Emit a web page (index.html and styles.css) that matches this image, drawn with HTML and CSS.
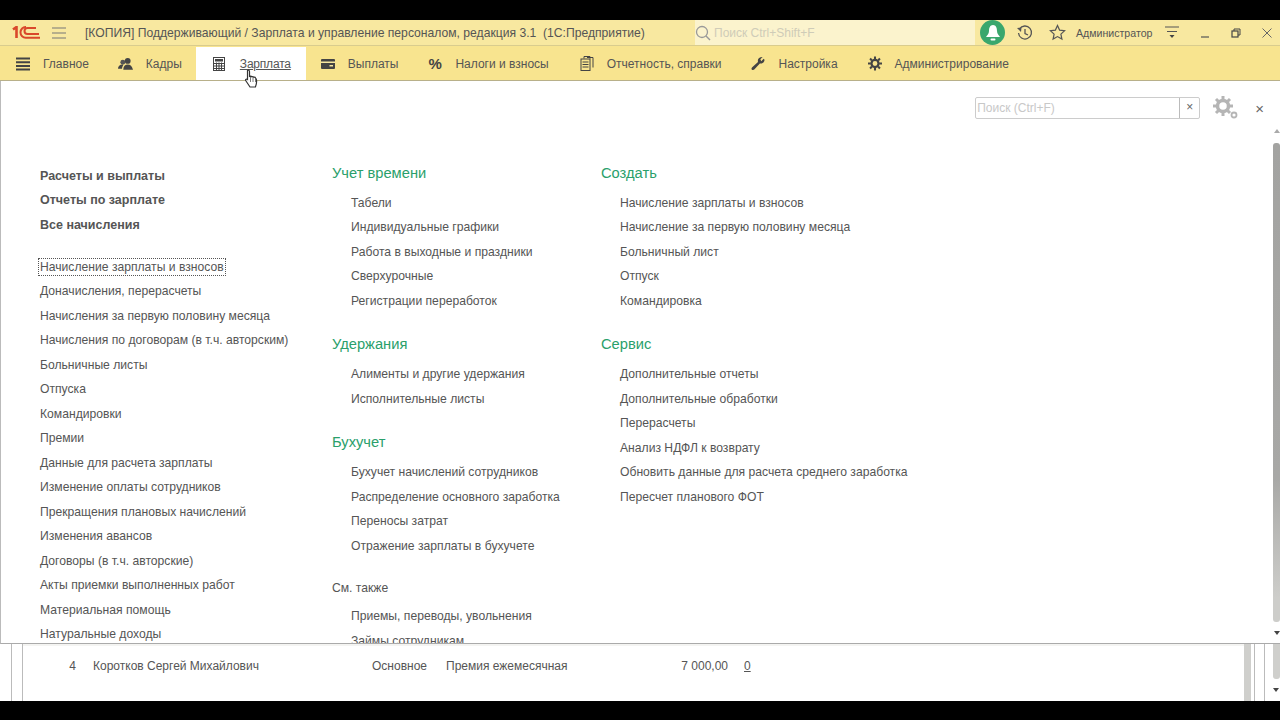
FILE: index.html
```html
<!DOCTYPE html>
<html>
<head>
    <title>Зарплата и управление персоналом</title>
    <meta charset="UTF-8">
    <link rel="stylesheet" href="styles.css">
</head>
<body>
    <div class="screen">
        <div class="titlebar">
            <svg class="logo" width="28" height="13" viewBox="0 0 28 13"><path d="M1 3.500l3.500-2.500v11" fill="none" stroke="#d9482b" stroke-width="2.600"/><path d="M27 8H15.500a3 3 0 0 1 0-6H24" fill="none" stroke="#d9482b" stroke-width="2"/><path d="M28 11.800H14a5.300 5.300 0 0 1-5.500-5.400A5.300 5.300 0 0 1 14 1" fill="none" stroke="#d9482b" stroke-width="2"/></svg>
            <svg class="burger" width="14" height="12" viewBox="0 0 14 12"><path d="M0 1h14M0 6h14M0 11h14" stroke="#777" stroke-width="1"/></svg>
            <div class="app-title">[КОПИЯ] Поддерживающий / Зарплата и управление персоналом, редакция 3.1&nbsp; (1С:Предприятие)</div>
            <div class="global-search">
                <svg width="16" height="16" viewBox="0 0 16 16"><circle cx="7" cy="7" r="5.500" fill="none" stroke="#999" stroke-width="1.300"/><path d="M11 11l4 4" stroke="#999" stroke-width="1.500"/></svg>
                <span>Поиск Ctrl+Shift+F</span>
            </div>
            <div class="bell">
                <svg width="16" height="18" viewBox="0 0 16 18"><path d="M8 1c3 0 4 3 4 6 0 3 2 4 3 6H1c1-2 3-3 3-6 0-3 1-6 4-6z" fill="#fff"/><rect x="5.500" y="14.500" width="5" height="2" rx="1" fill="#fff"/></svg>
            </div>
            <svg class="tool history" width="18" height="18" viewBox="0 0 18 18"><path d="M3.500 5a6.500 6.500 0 1 1-1 4" fill="none" stroke="#555" stroke-width="1.300"/><path d="M1 4l4.500-.5L5 8z" fill="#555"/><path d="M9 5v4.500l3 1.500" fill="none" stroke="#555" stroke-width="1.300"/></svg>
            <svg class="tool star" width="17" height="17" viewBox="0 0 17 17"><path d="M8.500 1.500l2.100 4.600 5 .6-3.700 3.400 1 5-4.400-2.500-4.400 2.500 1-5L1.400 6.700l5-.6z" fill="none" stroke="#555" stroke-width="1.200"/></svg>
            <div class="user">Администратор</div>
            <svg class="tool user-menu" width="14" height="13" viewBox="0 0 14 13"><path d="M0 1h14M2 5.500h10" stroke="#555" stroke-width="1"/><path d="M4.500 9h5L7 12z" fill="#444"/></svg>
            <div class="window-btns">
                <svg width="10" height="10" viewBox="0 0 10 10"><path d="M1 9h8" stroke="#555" stroke-width="1.200"/></svg>
                <svg width="10" height="10" viewBox="0 0 10 10"><rect x="1" y="3" width="6" height="6" fill="none" stroke="#444" stroke-width="1.200"/><path d="M3 3V1h6v6H7" fill="none" stroke="#444"/></svg>
                <svg width="10" height="10" viewBox="0 0 10 10"><path d="M.5.500l9 9M9.500.500l-9 9" stroke="#666" stroke-width="1"/></svg>
            </div>
        </div>

        <div class="sections">
            <div class="section">
                <svg width="14" height="14" viewBox="0 0 14 14"><path d="M0 1.500h14M0 5.200h14M0 8.900h14M0 12.600h14" stroke="#444" stroke-width="2"/></svg>
                <span>Главное</span>
            </div>
            <div class="section">
                <svg width="15" height="14" viewBox="0 0 17 15"><circle cx="11" cy="4" r="3.300" fill="#444"/><circle cx="5.500" cy="5.500" r="2.800" fill="#555"/><path d="M6 14c0-4 2-6 5-6s5 2 6 6zM0 13c0-3 2-5 5-5l1 .5C5 10 4.500 11.500 4.500 13z" fill="#444"/></svg>
                <span>Кадры</span>
            </div>
            <div class="section active">
                <svg width="12" height="14" viewBox="0 0 12 14"><rect x=".5" y=".5" width="11" height="13" fill="#fff" stroke="#444"/><rect x="2" y="2" width="8" height="2.500" fill="#444"/><path d="M1 6.500h10M1 9h10M1 11.500h10M3.500 5.500v8M6 5.500v8M8.500 5.500v8" stroke="#444" stroke-width="1"/></svg>
                <span class="active-label">Зарплата</span>
                <svg class="cursor" width="17" height="21" viewBox="0 0 16 21"><path d="M4 1.500c1-.8 2-.3 2 1v5l1-.3c.8 0 1.200.3 1.400.6.800-.3 1.500 0 1.800.5.800-.3 1.600 0 1.900.7l.8 1.500c.4 2 0 5-1 7.500H6.500L2.500 12c-1-1.500 0-2.500 1.500-1.500z" fill="#fff" stroke="#333" stroke-width="1.200"/><path d="M7 8v5M9.500 8v5M12 9v4" stroke="#555" stroke-width=".8"/></svg>
            </div>
            <div class="section">
                <svg width="14" height="10" viewBox="0 0 14 10"><rect width="14" height="10" rx="1" fill="#444"/><rect y="2.500" width="14" height="1.500" fill="#f8e8a0"/><rect x="8.500" y="6" width="3.500" height="1.500" fill="#f8e8a0"/></svg>
                <span>Выплаты</span>
            </div>
            <div class="section">
                <span class="percent">%</span>
                <span>Налоги и взносы</span>
            </div>
            <div class="section">
                <svg width="14" height="15" viewBox="0 0 13 15"><path d="M3.500 2.500V.5h6v2M6.500 1.500h6v10" fill="none" stroke="#444" stroke-width="1"/><rect x=".5" y="3" width="9" height="11.500" fill="none" stroke="#444"/><path d="M2 6h6M2 8.500h6M2 11h6" stroke="#444"/></svg>
                <span>Отчетность, справки</span>
            </div>
            <div class="section">
                <svg width="14" height="15" viewBox="0 0 15 15"><path d="M14.500 3.500c0 3-2.500 4.500-5 4L3.500 14c-1 1-3 .5-3-1 0-.6.300-1 .8-1.500L7.500 6c-.8-3 1-5.500 5-5.500L10 3l1 2 2.500-2.500z" fill="#444"/></svg>
                <span>Настройка</span>
            </div>
            <div class="section">
                <svg width="14" height="15" viewBox="0 0 15 15"><circle cx="7.500" cy="7.500" r="3.800" fill="none" stroke="#444" stroke-width="2.400"/><path d="M7.500 0v3M7.500 12v3M0 7.500h3M12 7.500h3M2.200 2.200l2 2M10.800 10.800l2 2M2.200 12.800l2-2M10.800 4.200l2-2" stroke="#444" stroke-width="2.200"/></svg>
                <span>Администрирование</span>
            </div>
        </div>

        <div class="panel">
            <div class="panel-tools">
                <div class="search-box">
                    <div class="search-input">Поиск (Ctrl+F)</div>
                    <div class="search-clear">×</div>
                </div>
                <svg class="gears" width="26" height="24" viewBox="0 0 26 24"><circle cx="10" cy="10" r="5.500" fill="none" stroke="#b5b5b5" stroke-width="3.500"/><path d="M10 0v4M10 16v4M0 10h4M16 10h4M3 3l3 3M14 14l3 3M3 17l3-3M14 6l3-3" stroke="#b5b5b5" stroke-width="3"/><circle cx="21" cy="19" r="2.500" fill="none" stroke="#b5b5b5" stroke-width="1.800"/></svg>
                <div class="panel-close">×</div>
            </div>

            <div class="columns">
                <div class="col col-main">
                    <div class="links-bold">
                        <div>Расчеты и выплаты</div>
                        <div>Отчеты по зарплате</div>
                        <div>Все начисления</div>
                    </div>
                    <div class="links">
                        <div><span class="focused">Начисление зарплаты и взносов</span></div>
                        <div>Доначисления, перерасчеты</div>
                        <div>Начисления за первую половину месяца</div>
                        <div>Начисления по договорам (в т.ч. авторским)</div>
                        <div>Больничные листы</div>
                        <div>Отпуска</div>
                        <div>Командировки</div>
                        <div>Премии</div>
                        <div>Данные для расчета зарплаты</div>
                        <div>Изменение оплаты сотрудников</div>
                        <div>Прекращения плановых начислений</div>
                        <div>Изменения авансов</div>
                        <div>Договоры (в т.ч. авторские)</div>
                        <div>Акты приемки выполненных работ</div>
                        <div>Материальная помощь</div>
                        <div>Натуральные доходы</div>
                    </div>
                </div>

                <div class="col col-second">
                    <div class="group-title">Учет времени</div>
                    <div class="links indented">
                        <div>Табели</div>
                        <div>Индивидуальные графики</div>
                        <div>Работа в выходные и праздники</div>
                        <div>Сверхурочные</div>
                        <div>Регистрации переработок</div>
                    </div>
                    <div class="group-title">Удержания</div>
                    <div class="links indented">
                        <div>Алименты и другие удержания</div>
                        <div>Исполнительные листы</div>
                    </div>
                    <div class="group-title">Бухучет</div>
                    <div class="links indented">
                        <div>Бухучет начислений сотрудников</div>
                        <div>Распределение основного заработка</div>
                        <div>Переносы затрат</div>
                        <div>Отражение зарплаты в бухучете</div>
                    </div>
                    <div class="see-also">См. также</div>
                    <div class="links indented">
                        <div>Приемы, переводы, увольнения</div>
                        <div>Займы сотрудникам</div>
                    </div>
                </div>

                <div class="col col-third">
                    <div class="group-title">Создать</div>
                    <div class="links indented">
                        <div>Начисление зарплаты и взносов</div>
                        <div>Начисление за первую половину месяца</div>
                        <div>Больничный лист</div>
                        <div>Отпуск</div>
                        <div>Командировка</div>
                    </div>
                    <div class="group-title">Сервис</div>
                    <div class="links indented">
                        <div>Дополнительные отчеты</div>
                        <div>Дополнительные обработки</div>
                        <div>Перерасчеты</div>
                        <div>Анализ НДФЛ к возврату</div>
                        <div>Обновить данные для расчета среднего заработка</div>
                        <div>Пересчет планового ФОТ</div>
                    </div>
                </div>
            </div>

            <div class="scrollbar">
                <div class="arrow-up"></div>
                <div class="thumb"></div>
                <div class="arrow-down"></div>
            </div>
        </div>

        <div class="behind">
            <div class="behind-edge"></div>
            <div class="behind-table">
                <div class="behind-row">
                    <span class="cell-num">4</span>
                    <span class="cell-name">Коротков Сергей Михайлович</span>
                    <span class="cell-type">Основное</span>
                    <span class="cell-accrual">Премия ежемесячная</span>
                    <span class="cell-sum">7 000,00</span>
                    <span class="cell-zero">0</span>
                </div>
            </div>
            <div class="behind-thumb"></div>
            <div class="behind-gap"></div>
            <div class="behind-scroll">
                <div class="behind-scroll-thumb"></div>
                <div class="arrow-down"></div>
            </div>
        </div>
    </div>
</body>
</html>
```

FILE: styles.css
```css
html, body { margin: 0; padding: 0; height: 100%; background: #000; }
body { font-family: "Liberation Sans", Arial, sans-serif; font-size: 12px; color: #555; overflow: hidden; padding-top: 20px; box-sizing: border-box; }
.screen { height: 681px; display: flex; flex-direction: column; background: #fff; }

.titlebar { height: 25px; background: #f8e8a0; border-bottom: 1px solid #d9cc8e; display: flex; align-items: center; flex-shrink: 0; }
.logo { margin-left: 12px; }
.burger { margin-left: 12px; }
.app-title { margin-left: 19px; width: 610px; white-space: nowrap; font-size: 12.15px; }
.global-search { width: 280px; height: 25px; background: #fbf3cd; display: flex; align-items: center; gap: 3px; color: #cfccb8; flex-shrink: 0; }
.bell { width: 25px; height: 25px; border-radius: 50%; background: #3aa76d; display: flex; align-items: center; justify-content: center; margin-left: 5px; flex-shrink: 0; }
.tool { flex-shrink: 0; }
.history { margin-left: 11px; }
.star { margin-left: 15px; }
.user { margin-left: 10px; font-size: 10.6px; white-space: nowrap; }
.user-menu { margin-left: 13px; }
.window-btns { display: flex; gap: 21px; margin-left: 21px; }

.sections { height: 34px; background: #f8e48f; border-bottom: 1px solid #b8b08a; display: flex; flex-shrink: 0; padding-left: 1px; }
.section { display: flex; align-items: center; gap: 13px; padding: 1px 15px 0; position: relative; white-space: nowrap; }
.section:nth-child(2) { padding: 1px 14px 0; }
.section:nth-child(6) { padding-left: 16px; }
.section.active { background: #fff; padding-left: 17px; margin-top: 1px; }
.section.active > svg:first-child { margin-right: 2px; }
.active-label { text-decoration: underline; letter-spacing: -.2px; }
.cursor { position: absolute; left: 47px; top: 22px; z-index: 2; }
.percent { font-size: 15px; font-weight: bold; color: #444; width: 15px; margin-right: -1px; }

.panel { height: 563px; flex-shrink: 0; background: #fff; border-left: 1px solid #bbb; border-bottom: 1px solid #aaa; box-sizing: border-box; position: relative; overflow: hidden; }
.panel-tools { display: flex; justify-content: flex-end; align-items: center; padding: 15px 16px 0 0; }
.search-box { width: 225px; height: 22px; border: 1px solid #ccc; border-radius: 2px; display: flex; box-sizing: border-box; }
.search-input { flex: 1; border-right: 1px solid #bbb; color: #c8c8c8; padding-left: 1px; line-height: 20px; }
.search-clear { width: 19px; text-align: center; line-height: 19px; color: #666; }
.gears { margin-left: 13px; }
.panel-close { margin-left: 16px; color: #666; font-size: 15px; }

.columns { display: flex; margin-top: 42.75px; font-size: 12.15px; }
.col-main { width: 292px; padding: .75px 0 0 39px; }
.col-second { width: 269px; padding-top: 2px; }
.col-third { padding-top: 2px; }
.links-bold div { height: 24.5px; line-height: 24.5px; font-weight: bold; font-size: 12.5px; }
.links-bold { margin-bottom: 17.5px; }
.links > div { height: 24.5px; line-height: 24.5px; white-space: nowrap; }
.focused { outline: 1px dotted #555; outline-offset: 1px; }
.group-title { font-size: 14.7px; color: #2aa06b; height: 17px; line-height: 17px; margin-bottom: 9px; }
.indented { padding-left: 19px; margin-bottom: 23px; }
.see-also { margin-top: -1px; height: 17px; line-height: 17px; margin-bottom: 7px; }

.scrollbar { position: absolute; top: 48px; right: 0; bottom: 0; width: 7px; display: flex; flex-direction: column; align-items: center; }
.arrow-up { border-left: 3px solid transparent; border-right: 3px solid transparent; border-bottom: 4px solid #aaa; margin-bottom: 10px; }
.thumb { flex: 1; width: 7px; background: linear-gradient(#a3a3a1, #a8a8a6 70%, #cdcdca 95%); border-radius: 3px; }
.arrow-down { border-left: 3px solid transparent; border-right: 3px solid transparent; border-top: 4px solid #444; margin: 9px 0 8px; }

.behind { flex: 1; display: flex; background: #fff; min-height: 0; }
.behind-edge { width: 11px; border-right: 1px solid #bbb; flex-shrink: 0; }
.behind-table { flex: 1; border-left: 1px solid #bbb; margin-left: 10px; padding-top: 9px; box-shadow: inset 0 7px 0 -5px #f4f4f2; }
.behind-row { display: flex; height: 26px; align-items: center; white-space: nowrap; }
.cell-num { width: 53px; text-align: right; }
.cell-name { margin-left: 17px; width: 279px; }
.cell-type { width: 74px; }
.cell-accrual { width: 200px; }
.cell-sum { width: 82px; text-align: right; }
.cell-zero { margin-left: 16px; text-decoration: underline; }
.behind-thumb { width: 7px; background: #cfcfcc; flex-shrink: 0; }
.behind-gap { width: 3px; border-right: 1px solid #bbb; flex-shrink: 0; margin-right: 9px; }
.behind-scroll { width: 16px; border-left: 1px solid #bbb; display: flex; flex-direction: column; align-items: flex-end; flex-shrink: 0; box-sizing: border-box; }
.behind-scroll-thumb { width: 7px; height: 35px; background: #cfcfcc; border-radius: 0 0 3px 3px; }
.behind-scroll .arrow-down { margin: 9px 1px 0; }
```
